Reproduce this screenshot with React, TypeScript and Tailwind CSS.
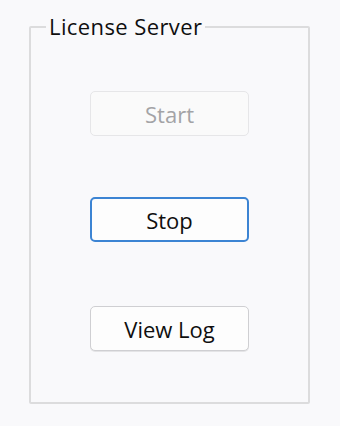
import React from "react";

const base =
  "w-[159px] h-[45px] rounded-[5px] text-[22px] font-medium leading-none flex items-center justify-center";

const App = () => {
  return (
    <div
      className="w-[340px] h-[426px] bg-[#f9f9fb] pt-[26px] pl-[29px]"
      style={{ fontFamily: '"Open Sans", "Noto Sans", sans-serif' }}
    >
      {/* Group box */}
      <div className="relative w-[281px] h-[378px] border-2 border-[#dcdcdd] rounded-[2px]">
        <span className="absolute left-[15px] top-[-17px] px-[3px] bg-[#f9f9fb] text-[22px] font-medium leading-[30px] text-[#0f0f0f] tracking-[0.4px]">
          License Server
        </span>

        <div className="flex flex-col items-center pt-[63px]">
          <button
            disabled
            className={`${base} bg-[#fafafa] border border-[#e6e6e8] text-[#a3a3a6]`}
          >
            Start
          </button>
          <button
            className={`${base} mt-[61px] bg-[#fdfdfd] border-2 border-[#3c84d3] text-[#0f0f0f]`}
          >
            Stop
          </button>
          <button
            className={`${base} mt-[64px] bg-[#fdfdfd] border-[1.5px] border-[#cfcfd2] text-[#0f0f0f] shadow-[0_1px_0_#e4e4e6]`}
          >
            View Log
          </button>
        </div>
      </div>
    </div>
  );
};

export default App;
